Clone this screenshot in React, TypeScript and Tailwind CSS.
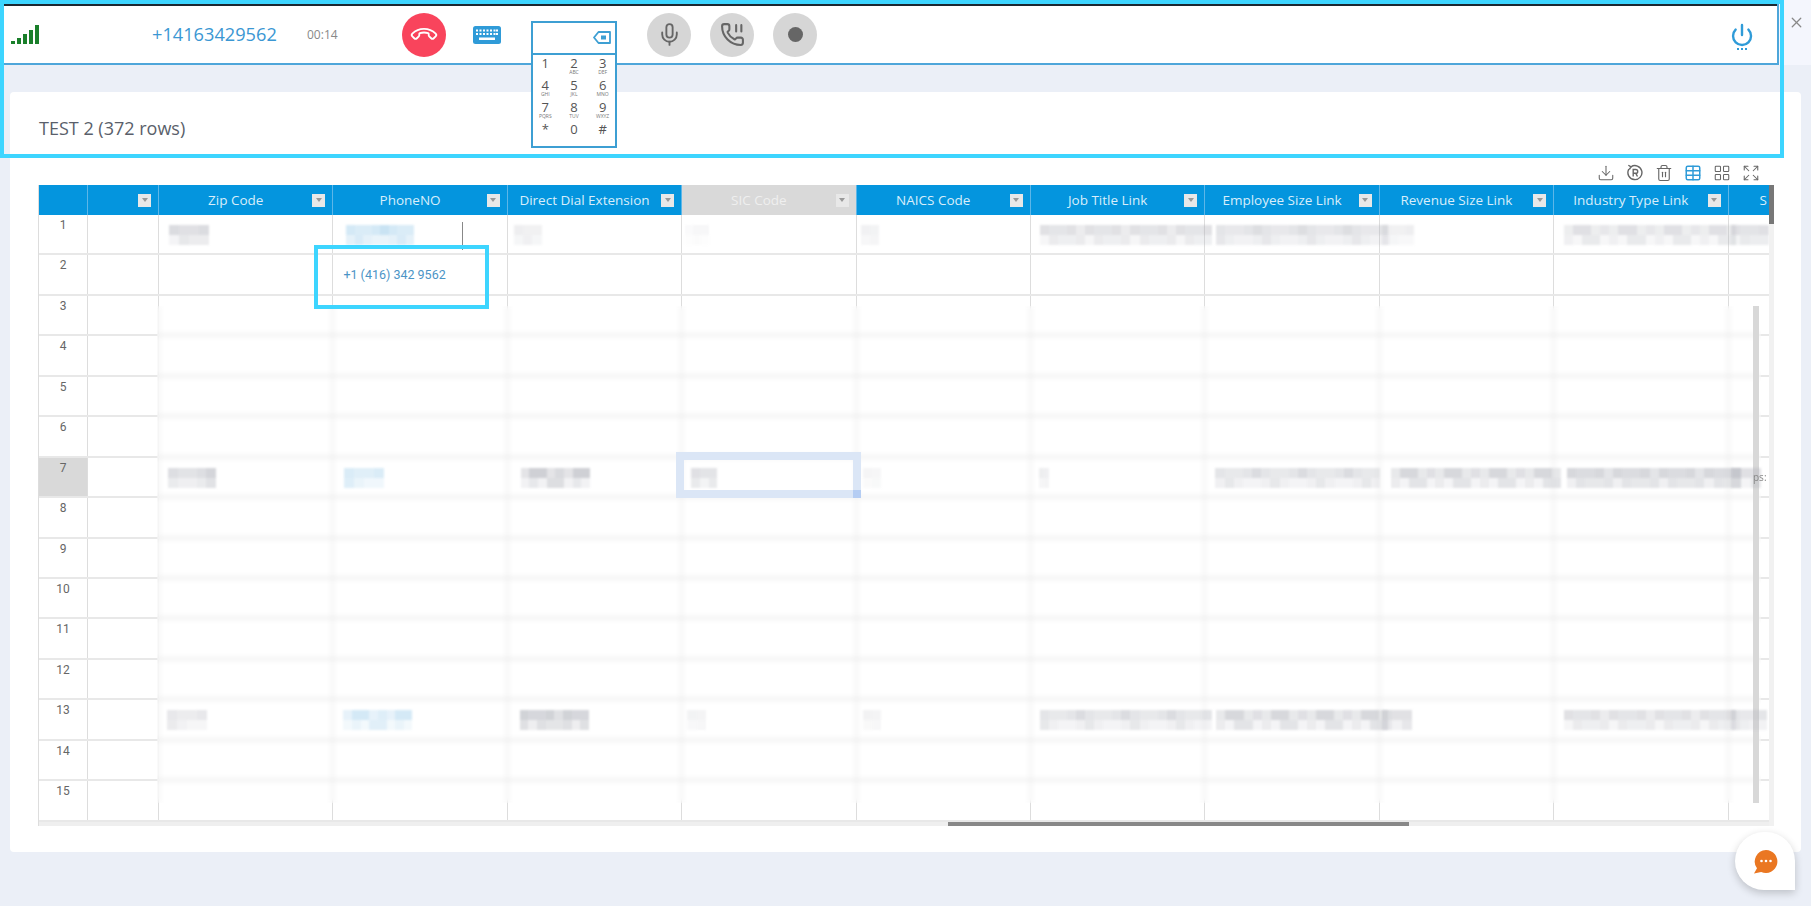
import { Download, Expand, LayoutGrid, Mic, Phone, Power, Table, Trash2, X } from 'lucide-react';

const columns = [
  { label: '', width: 'w-[71px]' },
  { label: 'Zip Code', width: 'w-[174.4px]' },
  { label: 'PhoneNO', width: 'w-[174.4px]' },
  { label: 'Direct Dial Extension', width: 'w-[174.4px]' },
  { label: 'SIC Code', width: 'w-[174.4px]', muted: true },
  { label: 'NAICS Code', width: 'w-[174.4px]' },
  { label: 'Job Title Link', width: 'w-[174.4px]' },
  { label: 'Employee Size Link', width: 'w-[174.4px]' },
  { label: 'Revenue Size Link', width: 'w-[174.4px]' },
  { label: 'Industry Type Link', width: 'w-[174.4px]' },
  { label: 'S', width: 'w-[174.4px]', clipped: true },
];

// [column index, offset inside the cell, width, strength, blue tint]
type Smudge = [number, number, number, number, boolean?];

const smudges: Record<number, Smudge[]> = {
  1: [
    [1, 10, 40, 0.7],
    [2, 13, 68, 0.7, true],
    [3, 6, 28, 0.45],
    [4, 3, 24, 0.15],
    [5, 4, 18, 0.25],
    [6, 9, 172, 0.6],
    [7, 11, 172, 0.6],
    [8, 2, 32, 0.45],
    [9, 10, 172, 0.55],
    [10, 2, 38, 0.55],
  ],
  7: [
    [1, 9, 48, 0.75],
    [2, 11, 40, 0.7, true],
    [3, 13, 69, 0.85],
    [4, 9, 26, 0.55],
    [5, 6, 18, 0.2],
    [6, 8, 10, 0.4],
    [7, 10, 165, 0.7],
    [8, 11, 170, 0.7],
    [9, 13, 174, 0.7],
    [10, 2, 30, 0.7],
  ],
  13: [
    [1, 8, 40, 0.6],
    [2, 10, 69, 0.55, true],
    [3, 12, 69, 0.8],
    [4, 5, 19, 0.25],
    [5, 6, 18, 0.3],
    [6, 9, 172, 0.7],
    [7, 11, 172, 0.7],
    [8, 2, 30, 0.6],
    [9, 10, 172, 0.6],
    [10, 2, 36, 0.6],
  ],
};

const Mosaic = ({ width, strength, blue, seed }: { width: number; strength: number; blue?: boolean; seed: number }) => {
  const count = Math.max(2, Math.round(width / 9));
  const rgb = blue ? '150,200,232' : '178,180,188';
  const cells = Array.from({ length: count * 2 }, (_, i) => {
    const noise = ((i + seed) * 37 + (i * i + seed) * 11) % 10;
    const base = i < count ? 0.42 : 0.2;
    return (base + noise * 0.04) * strength;
  });
  return (
    <div
      className="relative z-10 grid h-[20px] shrink-0 blur-[1px]"
      style={{ width, gridTemplateColumns: `repeat(${count}, 1fr)` }}
    >
      {cells.map((alpha, i) => (
        <div key={i} style={{ backgroundColor: `rgba(${rgb},${alpha})` }} />
      ))}
    </div>
  );
};

const KeyboardIcon = () => (
  <svg width="28" height="18" viewBox="0 0 28 18">
    <rect width="28" height="18" rx="2.5" fill="#2f9bd8" />
    {[3, 6.5, 10, 13.5, 17, 20.5, 23].map((x) => (
      <g key={x} fill="#fff">
        <rect x={x} y="3.5" width="2" height="2" />
        <rect x={x} y="7" width="2" height="2" />
      </g>
    ))}
    <rect x="6" y="11.5" width="16" height="2.5" fill="#fff" />
  </svg>
);

const HoldIcon = () => (
  <svg width="25" height="25" viewBox="0 0 24 24" fill="none" stroke="#666" strokeWidth="2" strokeLinecap="round" strokeLinejoin="round">
    <path d="M13.8 16.6a1 1 0 0 0 1.2-.3l.4-.5a2 2 0 0 1 1.6-.8h3a2 2 0 0 1 2 2v3a2 2 0 0 1-2 2A18 18 0 0 1 2 4a2 2 0 0 1 2-2h3a2 2 0 0 1 2 2v3a2 2 0 0 1-.8 1.6l-.5.4a1 1 0 0 0-.3 1.2 14 14 0 0 0 6.4 6.4" />
    <path d="M15.5 3v6M20.5 3v6" />
  </svg>
);

const BackspaceIcon = () => (
  <svg width="18" height="13" viewBox="0 0 18 13" fill="none">
    <path d="M5.5 1H17v11H5.5L1 6.5z" stroke="#3d9fd3" strokeWidth="1.8" strokeLinejoin="round" />
    <rect x="8" y="4.5" width="5" height="4" fill="#3d9fd3" />
  </svg>
);

const ResetIcon = () => (
  <svg width="18" height="18" viewBox="0 0 18 18" fill="none" stroke="#666" strokeWidth="1.4">
    <path d="M5 2.8A7 7 0 1 1 2.6 5.6" strokeLinecap="round" />
    <path d="M2.8 1.5 5 2.8 3.6 5" strokeLinecap="round" />
    <path d="M7.2 12.5v-7h2.6a1.9 1.9 0 0 1 0 3.8H7.2M9.8 9.3l1.7 3.2" />
  </svg>
);

const ChatIcon = () => (
  <svg width="25" height="25" viewBox="0 0 25 25">
    <path d="M13 1a11.5 11.5 0 1 1-4.8 22L1 24.5l3-5.2A11.5 11.5 0 0 1 13 1z" fill="#ea7722" />
    <circle cx="8.5" cy="12" r="1.3" fill="#fff" />
    <circle cx="13" cy="12" r="1.3" fill="#fff" />
    <circle cx="17.5" cy="12" r="1.3" fill="#fff" />
  </svg>
);

const keys = [
  ['1', ''],
  ['2', 'ABC'],
  ['3', 'DEF'],
  ['4', 'GHI'],
  ['5', 'JKL'],
  ['6', 'MNO'],
  ['7', 'PQRS'],
  ['8', 'TUV'],
  ['9', 'WXYZ'],
  ['*', ''],
  ['0', ''],
  ['#', ''],
];

const DialPad = () => (
  <div className="absolute left-0 top-[-4px] z-20 flex h-[127px] w-[86px] flex-col border-2 border-[#3d9fd3] bg-white">
    <div className="flex h-[32px] items-center justify-end border-b-2 border-[#3d9fd3] pr-[4px]">
      <BackspaceIcon />
    </div>
    <div className="-mx-[2px] grid flex-1 grid-cols-3 grid-rows-4 pt-[1px] pb-[3px]">
      {keys.map(([digit, letters]) => (
        <div key={digit} className="flex flex-col items-center justify-center text-[#555]">
          <span className="text-[13px] leading-[13px]">{digit}</span>
          <span className="h-[5px] text-[5px] leading-[5px] text-[#777]">{letters}</span>
        </div>
      ))}
    </div>
  </div>
);

const CircleButton = ({ children, className }: { children: React.ReactNode; className: string }) => (
  <div className={`flex h-[44px] w-[44px] shrink-0 items-center justify-center rounded-full ${className}`}>
    {children}
  </div>
);

const CallBar = () => (
  <div className="relative z-10 flex h-[65px] shrink-0 bg-[#f4f6fd] blur-[0.5px]">
    <div className="w-[1779px] shrink-0 border-r-2 border-b-2 border-[#4ea6da] bg-white">
      <div className="h-[4px]" />
      <div className="h-[2px] bg-[#1c2730]" />
      <div className="flex h-[57px] items-center">
        <div className="ml-[11px] flex h-[19px] w-[29px] shrink-0 items-end gap-[2px]">
          <div className="h-[3px] w-[4px] bg-[#1a7f2a]" />
          <div className="h-[6px] w-[4px] bg-[#1a7f2a]" />
          <div className="h-[10px] w-[4px] bg-[#1a7f2a]" />
          <div className="h-[14px] w-[4px] bg-[#1a7f2a]" />
          <div className="h-[19px] w-[4px] bg-[#1a7f2a]" />
        </div>
        <span className="ml-[112px] w-[155px] shrink-0 text-[18.2px] font-medium text-[#3b97d3]">+14163429562</span>
        <span className="w-[95px] shrink-0 text-[12px] text-[#888]">00:14</span>
        <CircleButton className="bg-[#f9445c]">
          <Phone size={22} strokeWidth={2} className="rotate-[135deg] text-white" />
        </CircleButton>
        <div className="ml-[27px] w-[58px] shrink-0">
          <KeyboardIcon />
        </div>
        <div className="relative h-[20px] w-[116px] shrink-0">
          <DialPad />
        </div>
        <div className="flex gap-[19px]">
          <CircleButton className="bg-[#d6d6d6]">
            <Mic size={25} strokeWidth={1.8} className="text-[#666]" />
          </CircleButton>
          <CircleButton className="bg-[#d6d6d6]">
            <HoldIcon />
          </CircleButton>
          <CircleButton className="bg-[#d6d6d6]">
            <div className="h-[15px] w-[15px] rounded-full bg-[#666]" />
          </CircleButton>
        </div>
        <div className="ml-auto mr-[23px] mt-[3px] flex flex-col items-center gap-[1px]">
          <Power size={24} strokeWidth={2.4} className="text-[#2f9bd8]" />
          <div className="flex gap-[2px]">
            <div className="h-[2px] w-[2px] bg-[#2f9bd8]" />
            <div className="h-[2px] w-[2px] bg-[#2f9bd8]" />
            <div className="h-[2px] w-[2px] bg-[#2f9bd8]" />
          </div>
        </div>
      </div>
    </div>
    <div className="flex flex-1 justify-end pt-[14px] pr-[6px]">
      <X size={17} strokeWidth={1.8} className="text-[#888]" />
    </div>
  </div>
);

const Toolbar = () => (
  <div className="flex h-[25px] items-center justify-end gap-[11px] pr-[41px] text-[#666]">
    <Download size={18} strokeWidth={1.4} />
    <ResetIcon />
    <Trash2 size={18} strokeWidth={1.5} />
    <Table size={18} strokeWidth={2} className="text-[#2f9bd8]" />
    <LayoutGrid size={18} strokeWidth={1.4} />
    <Expand size={18} strokeWidth={1.4} />
  </div>
);

const HeaderRow = () => (
  <div className="flex h-[30px] bg-[#0495de]">
    <div className="w-[49px] shrink-0 border-r border-[#5db6e8]" />
    {columns.map((col) => (
      <div
        key={col.label || 'blank'}
        className={`flex shrink-0 items-center border-r border-[#5db6e8] ${col.width} ${col.muted ? 'bg-[#d9d9d9]' : ''}`}
      >
        <span
          className={`flex-1 text-[13.5px] ${col.muted ? 'text-[#efefef]' : 'text-[#d8eefb]'} ${col.clipped ? 'pl-[31px] text-left' : 'text-center'}`}
        >
          {col.label}
        </span>
        <div className="mr-[7px] flex h-[13px] w-[13px] items-center justify-center bg-[#e8e8e8]">
          <div className="h-0 w-0 border-x-[3px] border-t-[4px] border-x-transparent border-t-[#999]" />
        </div>
      </div>
    ))}
  </div>
);

const DataRow = ({ n }: { n: number }) => (
  <div className="flex h-[40.45px] border-b-2 border-[#e8e8e8]">
    <div
      className={`w-[49px] shrink-0 border-r border-[#ddd] pt-[1px] text-center font-['Roboto'] text-[12px] text-[#666] ${n === 7 ? 'bg-[#d9d9d9]' : ''}`}
    >
      {n}
    </div>
    {columns.map((col, c) => {
      const smudge = smudges[n]?.find((s) => s[0] === c);
      return (
        <div key={c} className={`flex shrink-0 items-start border-r border-[#ddd] pt-[10px] ${col.width}`}>
          {smudge && (
            <div style={{ marginLeft: smudge[1] }}>
              <Mosaic width={smudge[2]} strength={smudge[3]} blue={smudge[4]} seed={n + c} />
            </div>
          )}
          {n === 2 && c === 2 && (
            <span className="ml-[10px] mt-[1px] font-['Roboto'] text-[12.5px] text-[#4b94c6]">+1 (416) 342 9562</span>
          )}
        </div>
      );
    })}
  </div>
);

const rows = Array.from({ length: 15 }, (_, i) => i + 1);

const Grid = () => (
  <div className="relative flex w-[1736px] border-l border-[#ddd]">
    <div className="w-[1730px] overflow-hidden">
      <div className="w-[1900px]">
        <HeaderRow />
        {rows.map((n) => (
          <DataRow key={n} n={n} />
        ))}
      </div>
      <div className="h-[4px] bg-[#efefef]">
        <div className="ml-[909px] h-[4px] w-[461px] bg-[#888]" />
      </div>
    </div>
    <div className="w-[5px] shrink-0 bg-[#f1f1f1]">
      <div className="h-[39px] bg-[#777]" />
    </div>

    {/* the part of the sheet that was blurred out */}
    <div className="absolute left-[118px] top-[121px] h-[497px] w-[1604px] backdrop-blur-[2.5px]">
      <div className="absolute right-[2px] top-0 h-full w-[6px] bg-[#d8d8d8]" />
    </div>
    <span className="absolute left-[1714px] top-[285px] z-10 text-[10px] text-[#888]">ps:</span>

    {/* selected cell */}
    <div className="absolute left-[637px] top-[267px] h-[46px] w-[185px] border-8 border-[#dbe6f6]">
      <div className="absolute right-[-8px] bottom-[-8px] h-[8px] w-[8px] bg-[#b5cdf3]" />
    </div>
    <div className="absolute left-[423px] top-[37px] h-[28px] w-px bg-[#888]" />
  </div>
);

const App = () => (
  <div className="relative flex h-[906px] w-[1811px] flex-col overflow-hidden bg-[#ebeff7] font-['Open_Sans',sans-serif]">
    <CallBar />
    <div className="mx-[10px] mt-[27px] flex h-[760px] flex-col rounded bg-white pl-[28px] blur-[0.5px]">
      <div className="flex h-[68px] shrink-0 items-end pb-[18px] pl-[1px] text-[18px] font-medium text-[#5a5f6b]">TEST 2 (372 rows)</div>
      <Toolbar />
      <Grid />
    </div>

    {/* annotation frames drawn on the screenshot */}
    <div className="absolute left-0 top-0 z-20 h-[158px] w-[1784px] border-[4px] border-[#3dd5ff]" />
    <div className="absolute left-[314px] top-[245px] z-20 h-[64px] w-[175px] border-[4px] border-[#3dd5ff]" />

    <div className="absolute left-[1735px] top-[832px] z-20 flex h-[58px] w-[60px] items-center justify-center rounded-full rounded-br-md bg-white shadow-[0_3px_8px_rgba(0,0,0,0.2)]">
      <ChatIcon />
    </div>
  </div>
);

export default App;
